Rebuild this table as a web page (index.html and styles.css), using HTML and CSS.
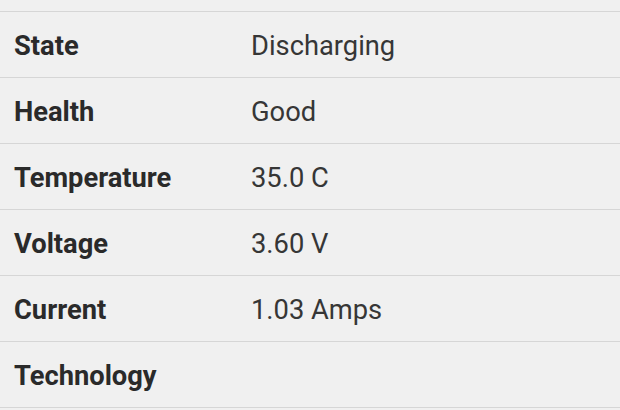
FILE: index.html
```html
<!DOCTYPE html>
<html>
<head>
<meta charset="utf-8">
<link rel="stylesheet" href="styles.css">
</head>
<body>
<div class="table">
  <div class="row"><div class="label">State</div><div class="value">Discharging</div></div>
  <div class="row"><div class="label">Health</div><div class="value">Good</div></div>
  <div class="row"><div class="label">Temperature</div><div class="value">35.0 C</div></div>
  <div class="row"><div class="label">Voltage</div><div class="value">3.60 V</div></div>
  <div class="row"><div class="label">Current</div><div class="value">1.03 Amps</div></div>
  <div class="row"><div class="label">Technology</div><div class="value"></div></div>
  <div class="end"></div>
</div>
</body>
</html>
```
FILE: styles.css
```css
html, body {
  margin: 0;
  padding: 0;
  background: #f0f0f0;
}
body {
  width: 620px;
  height: 410px;
  overflow: hidden;
  font-family: Roboto, "Liberation Sans", sans-serif;
}
.table {
  padding-top: 11px;
}
.row {
  display: flex;
  align-items: center;
  box-sizing: border-box;
  height: 66px;
  padding-top: 2px;
  border-top: 1px solid #d6d6d6;
}
.end {
  border-top: 1px solid #d6d6d6;
}
.label {
  width: 237px;
  padding-left: 14px;
  font-weight: bold;
  font-size: 27.3px;
  color: #2a2a2a;
}
.value {
  font-size: 27.3px;
  color: #363636;
}
```
